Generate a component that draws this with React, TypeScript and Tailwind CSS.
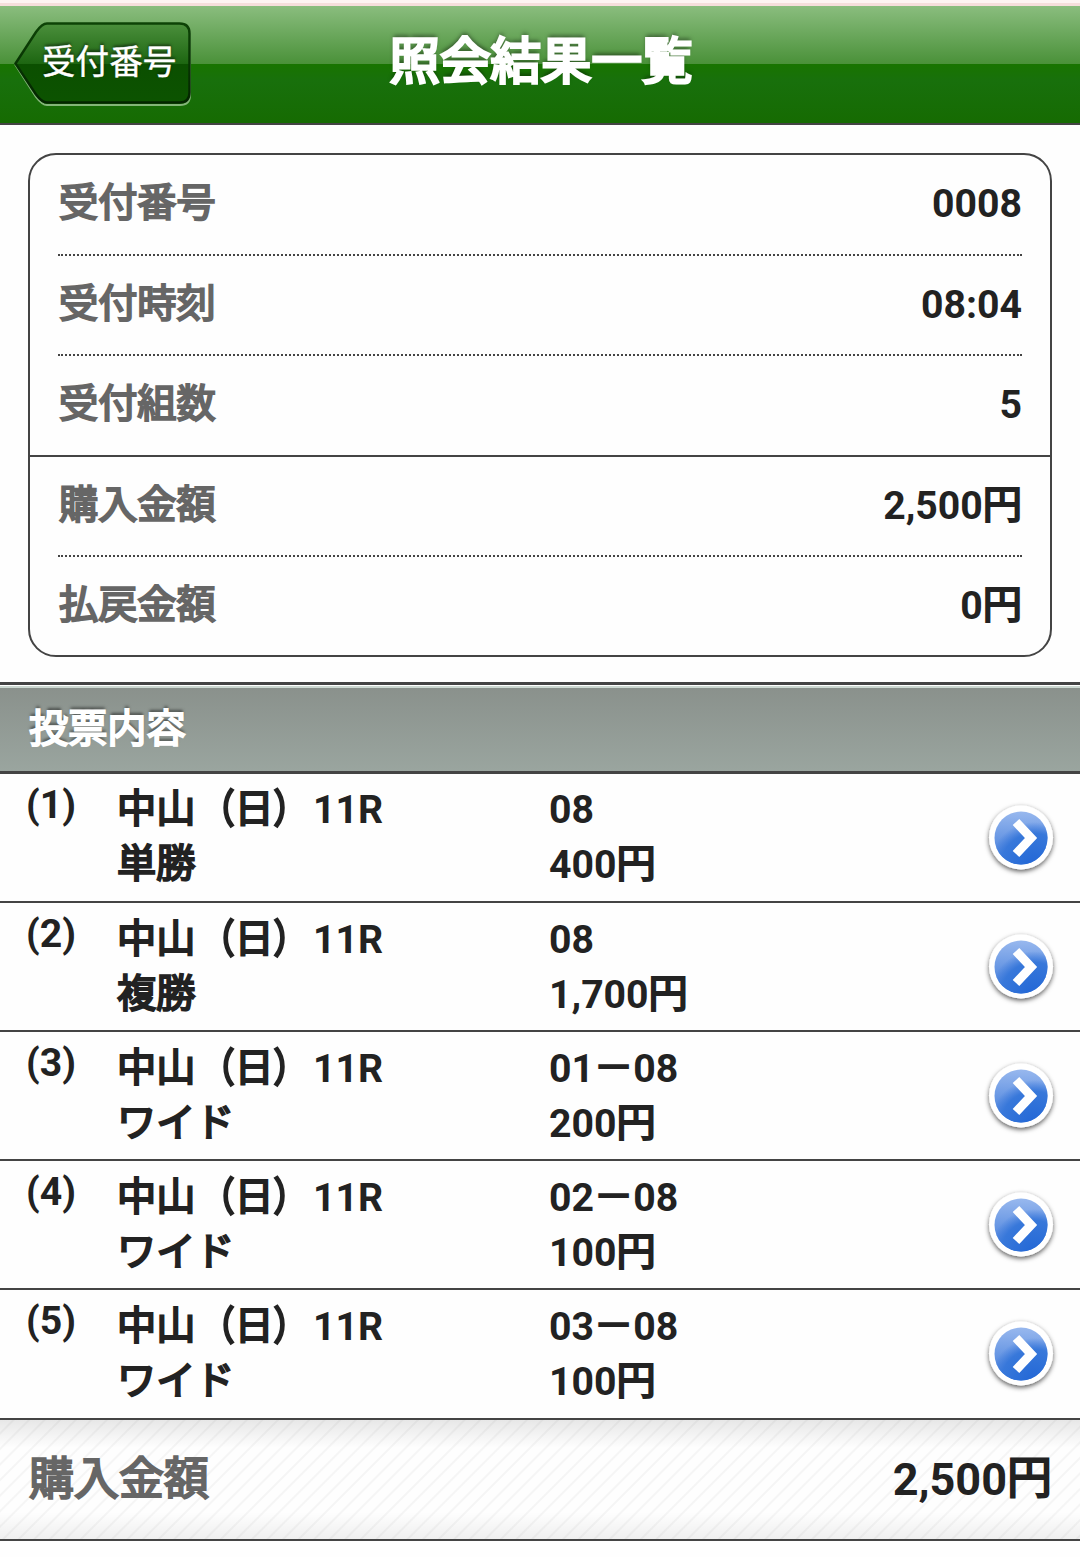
type Bet = { race: string; kind: string; numbers: string; amount: string };

const bets: Bet[] = [
  { race: "中山（日）11R", kind: "単勝", numbers: "08", amount: "400円" },
  { race: "中山（日）11R", kind: "複勝", numbers: "08", amount: "1,700円" },
  { race: "中山（日）11R", kind: "ワイド", numbers: "01－08", amount: "200円" },
  { race: "中山（日）11R", kind: "ワイド", numbers: "02－08", amount: "100円" },
  { race: "中山（日）11R", kind: "ワイド", numbers: "03－08", amount: "100円" },
];

const summary = [
  { label: "受付番号", value: "0008", row: "h-[101px] border-b-2 border-dotted" },
  { label: "受付時刻", value: "08:04", row: "h-[100px] border-b-2 border-dotted pt-[2px]" },
  { label: "受付組数", value: "5", row: "h-[99px]" },
];

const amounts = [
  { label: "購入金額", value: "2,500円", row: "h-[100px] border-b-2 border-dotted pt-[2px]" },
  { label: "払戻金額", value: "0円", row: "h-[98px] pt-[2px]" },
];

// Full-width brackets are condensed towards the text they enclose.
function condenseBrackets(run: string) {
  return run.split(/([（）])/).map((part, i) => {
    if (part === "（")
      return (
        <span
          key={i}
          className="inline-block origin-right scale-x-[0.8] [-webkit-text-stroke:3px_currentColor]"
        >
          （
        </span>
      );
    if (part === "）")
      return (
        <span
          key={i}
          className="inline-block origin-left scale-x-[0.8] [-webkit-text-stroke:3px_currentColor]"
        >
          ）
        </span>
      );
    return part;
  });
}

// Japanese runs are drawn as emboldened regular glyphs beside Roboto's real bold.
function Mixed({ children }: { children: string }) {
  return (
    <>
      {children.split(/([^\x00-\x7f]+)/).map((run, i) =>
        i % 2 === 1 ? (
          <span
            key={i}
            className="relative -top-px font-['Noto_Sans_CJK_JP',sans-serif] leading-[0] font-normal [-webkit-text-stroke:2.1px_currentColor]"
          >
            {condenseBrackets(run)}
          </span>
        ) : (
          run
        ),
      )}
    </>
  );
}

function SummaryRow({ label, value, row }: { label: string; value: string; row: string }) {
  return (
    <div className={`mx-7 flex items-center justify-between border-[#444] ${row}`}>
      <span className="ml-px text-[#666]">
        <Mixed>{label}</Mixed>
      </span>
      <span>
        <Mixed>{value}</Mixed>
      </span>
    </div>
  );
}

function BackButton() {
  return (
    <button className="relative flex h-[86px] w-[180px] shrink-0 items-center">
      <svg className="absolute inset-0" width="180" height="86" viewBox="0 0 180 86" fill="none">
        <defs>
          <linearGradient id="backFill" x1="0" y1="0" x2="0" y2="1">
            <stop offset="0" stopColor="#4b8f3c" />
            <stop offset="0.51" stopColor="#1d6611" />
            <stop offset="0.51" stopColor="#0b4f00" />
            <stop offset="1" stopColor="#0c5300" />
          </linearGradient>
          <linearGradient id="backEdge" x1="0" y1="0" x2="0" y2="1">
            <stop offset="0" stopColor="#0d4306" />
            <stop offset="1" stopColor="#032500" />
          </linearGradient>
        </defs>
        <path
          d="M33 3H166Q176 3 176 13V73Q176 83 166 83H33Q28 83 22 75L1.500 43L22 11Q28 3 33 3Z"
          stroke="#83b578"
          strokeWidth="2"
        />
        <path
          d="M33 1.500H165.500Q175.500 1.500 175.500 11.500V70.500Q175.500 80.500 165.500 80.500H33Q28 80.500 22 72.500L1.500 41.500L22 10Q28 1.500 33 1.500Z"
          fill="url(#backFill)"
          stroke="url(#backEdge)"
          strokeWidth="2.500"
        />
      </svg>
      <span className="relative -mt-[4px] ml-[28px] text-[33.6px] leading-none font-normal [-webkit-text-stroke:0.4px_currentColor] [text-shadow:0_-2px_3px_rgba(0,0,0,0.6)]">
        受付番号
      </span>
    </button>
  );
}

function ArrowBadge() {
  return (
    <svg className="shrink-0" width="80" height="80" viewBox="0 0 80 80" fill="none">
      <defs>
        <linearGradient id="arrowBlue" x1="0" y1="0" x2="0" y2="1">
          <stop offset="0" stopColor="#98b8ee" />
          <stop offset="1" stopColor="#3b78da" />
        </linearGradient>
        <radialGradient id="arrowGlow" cx="0.75" cy="1.05" r="0.85">
          <stop offset="0" stopColor="#2166d6" />
          <stop offset="0.75" stopColor="#3878da" />
          <stop offset="1" stopColor="#3f7bdc" stopOpacity="0" />
        </radialGradient>
        <filter id="arrowShadow" x="-30%" y="-30%" width="160%" height="160%">
          <feDropShadow dx="0" dy="2" stdDeviation="2.500" floodColor="#000" floodOpacity="0.65" />
        </filter>
      </defs>
      <circle cx="40" cy="39.500" r="32" fill="#fff" filter="url(#arrowShadow)" />
      <circle cx="40" cy="40" r="26.500" fill="url(#arrowBlue)" />
      <circle cx="40" cy="40" r="26.500" fill="url(#arrowGlow)" />
      <path d="M35 24L50 40L35 56" stroke="#fff" strokeWidth="9" />
    </svg>
  );
}

export default function App() {
  return (
    <div className="h-[1557px] w-[1080px] overflow-hidden bg-[#fefefe] font-['Roboto','Noto_Sans_CJK_JP',sans-serif] text-[39.2px] leading-none font-bold text-[#222]">
      <div className="h-[6px] border-b-[3px] border-[#f5dedb] bg-[#fdf4f2]" />
      <header className="grid h-[119px] grid-cols-[1fr_auto_1fr] items-center border-b-2 border-[#444] bg-[linear-gradient(to_bottom,#8abd7e_0,#4a9139_58px,#187400_58px,#18700c_75px,#166b02_117px)] text-white">
        <div className="pl-[14px]">
          <BackButton />
        </div>
        <h1 className="-mt-[4px] ml-[2px] text-[50.5px] font-normal [-webkit-text-stroke:3px_currentColor] [text-shadow:0_-3px_4px_rgba(0,0,0,0.55)]">
          照会結果一覧
        </h1>
      </header>

      <section className="mx-7 mt-7 h-[504px] rounded-[28px] border-2 border-[#444]">
        {summary.map((item) => (
          <SummaryRow key={item.label} {...item} />
        ))}
        <div className="h-[2px] bg-[#444]" />
        {amounts.map((item) => (
          <SummaryRow key={item.label} {...item} />
        ))}
      </section>

      <h2 className="mt-[25px] flex h-[92px] flex-col border-y-[3px] border-[#444] bg-[linear-gradient(to_bottom,#fff_0,#fff_1px,#ccd8d1_1px,#ccd8d1_3px,#8a918c_3px,#9aa59f_86px)] text-white">
        <span className="mt-[26px] ml-[29px] [text-shadow:0_-3px_3px_rgba(0,0,0,0.5)]">
          <Mixed>投票内容</Mixed>
        </span>
      </h2>

      <ul>
        {bets.map((bet, i) => (
          <li
            key={i}
            className="group flex h-[129px] items-center border-b-2 border-[#444] last:h-[130px]"
          >
            <span className="w-[117px] self-start pt-[12px] pl-[26px]">({i + 1})</span>
            <div className="w-[432px] pt-[2px] leading-[55px] group-first:pt-px">
              <p>
                <Mixed>{bet.race}</Mixed>
              </p>
              <p>
                <Mixed>{bet.kind}</Mixed>
              </p>
            </div>
            <div className="flex-1 pt-[2px] leading-[55px] group-first:pt-px">
              <p>
                <Mixed>{bet.numbers}</Mixed>
              </p>
              <p>
                <Mixed>{bet.amount}</Mixed>
              </p>
            </div>
            <div className="mr-[19px]">
              <ArrowBadge />
            </div>
          </li>
        ))}
      </ul>

      <footer className="flex h-[121px] items-center justify-between border-b-2 border-[#444] bg-[linear-gradient(to_bottom,rgba(0,0,0,0.09)_0,rgba(0,0,0,0)_28px,rgba(0,0,0,0)_92px,rgba(0,0,0,0.06)_119px),repeating-linear-gradient(135deg,#fefefe_0,#fefefe_8px,#f5f5f5_9px,#f5f5f5_10px,#fefefe_11px)] px-7 text-[45px]">
        <span className="mt-[2px] ml-px text-[#666]">
          <Mixed>購入金額</Mixed>
        </span>
        <span>
          <Mixed>2,500円</Mixed>
        </span>
      </footer>
    </div>
  );
}
